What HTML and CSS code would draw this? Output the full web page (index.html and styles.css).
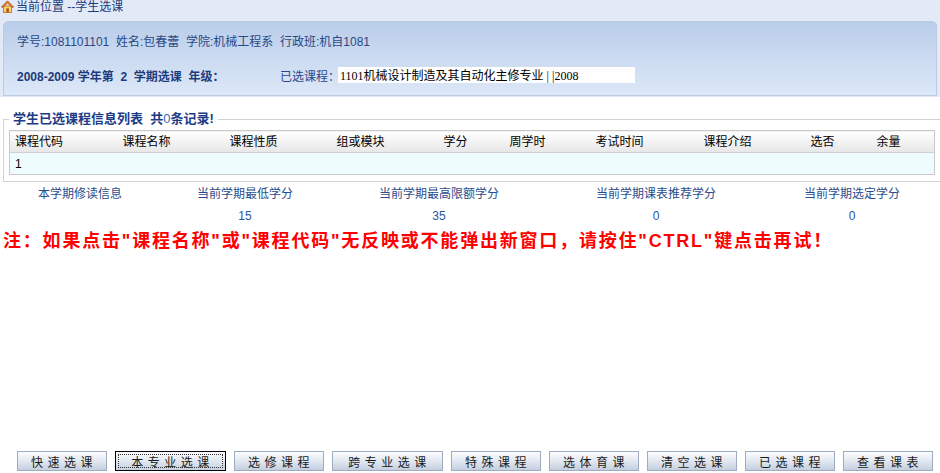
FILE: index.html
```html
<!DOCTYPE html>
<html lang="zh-CN">
<head>
    <meta charset="UTF-8">
    <title>学生选课</title>
    <link rel="stylesheet" href="styles.css">
</head>
<body>
    <div class="top">
        <div class="crumb">
            <svg width="13" height="13" viewBox="0 0 13 13">
                <rect x="2.5" y="6" width="8" height="6.5" fill="#f7d46e" stroke="#c8832a"/>
                <rect x="5.3" y="8.3" width="2.6" height="4.2" fill="#b8561c"/>
                <polygon points="6.5,0.8 0.3,7 2,7.6 6.5,3 11,7.6 12.7,7" fill="#e0762a" stroke="#b4521a" stroke-width="0.6"/>
            </svg>
            <span>当前位置 --学生选课</span>
        </div>
        <div class="panel">
            <div class="line1">学号:1081101101&nbsp; 姓名:包春蕾&nbsp; 学院:机械工程系&nbsp; 行政班:机自1081</div>
            <div class="line2">
                <span class="term">2008-2009 学年第&nbsp; 2&nbsp; 学期选课&nbsp; 年级：</span>
                <span class="sel">已选课程：</span>
                <input class="plan" type="text" value="1101机械设计制造及其自动化主修专业 | |2008" readonly>
            </div>
        </div>
    </div>

    <fieldset class="list">
        <legend>学生已选课程信息列表&nbsp; 共<span class="num">0</span>条记录!</legend>
        <table class="grid">
            <thead>
                <tr>
                    <th class="w108">课程代码</th>
                    <th class="w107">课程名称</th>
                    <th class="w107">课程性质</th>
                    <th class="w107">组或模块</th>
                    <th class="w66">学分</th>
                    <th class="w86">周学时</th>
                    <th class="w108">考试时间</th>
                    <th class="w107">课程介绍</th>
                    <th class="w66">选否</th>
                    <th>余量</th>
                </tr>
            </thead>
            <tbody>
                <tr>
                    <td>1</td><td></td><td></td><td></td><td></td><td></td><td></td><td></td><td></td><td></td>
                </tr>
            </tbody>
        </table>
    </fieldset>

    <div class="credits">
        <div>本学期修读信息</div>
        <div>当前学期最低学分</div>
        <div>当前学期最高限额学分</div>
        <div>当前学期课表推荐学分</div>
        <div>当前学期选定学分</div>
        <div class="val"></div>
        <div class="val">15</div>
        <div class="val">35</div>
        <div class="val">0</div>
        <div class="val">0</div>
    </div>

    <p class="notice">注：如果点击"课程名称"或"课程代码"无反映或不能弹出新窗口，请按住"CTRL"键点击再试！</p>

    <div class="actions">
        <button class="btn">快速选课</button>
        <button class="btn wide on">本专业选课</button>
        <button class="btn">选修课程</button>
        <button class="btn wide">跨专业选课</button>
        <button class="btn">特殊课程</button>
        <button class="btn">选体育课</button>
        <button class="btn">清空选课</button>
        <button class="btn">已选课程</button>
        <button class="btn">查看课表</button>
    </div>
</body>
</html>
```

FILE: styles.css
```css
html { overflow: hidden; }
body { margin: 0; min-height: 473px; display: flex; flex-direction: column; font: 12px "Liberation Sans", "Noto Sans CJK SC", sans-serif; color: #000; background: #fff; }

.top { background: #e2eaf8; padding-bottom: 1px; }
.crumb { height: 21px; display: flex; align-items: flex-start; gap: 2px; padding-left: 1px; color: #1f3c7c; line-height: 15px; }
.crumb svg { flex: none; }
.panel { height: 73px; margin: 0 3px; padding: 0 13px; border: 1px solid #b9cae3; border-radius: 5px 5px 0 0; background: linear-gradient(#b9cde9, #dde8f8); color: #2a4886; }
.line1 { height: 16px; line-height: 16px; margin-top: 12px; }
.line2 { height: 18px; margin-top: 16px; display: flex; align-items: center; }
.term { width: 263px; flex: none; font-weight: bold; color: #1d3b7a; }
.sel { flex: none; }
.plan { width: 297px; height: 16px; box-sizing: border-box; margin: 0 0 0 -2px; padding: 0 2px; border: none; background: #fff; font: 12px "Liberation Serif", "Noto Sans CJK SC", serif; color: #000; }

.list { margin: 14px -1px 0 3px; padding: 3px 5px 6px; border: 1px solid #d2d2d2; }
.list legend { padding: 0 4px; font-size: 13px; font-weight: bold; line-height: 16px; color: #1c3c86; }
.list .num { color: #3a66b8; font-weight: normal; }
.grid { width: 100%; table-layout: fixed; border-collapse: collapse; border: 1px solid #c9c9c9; }
.grid th, .grid td { box-sizing: border-box; padding: 0 0 0 5px; white-space: nowrap; line-height: 16px; }
.grid th { height: 22px; text-align: left; font-weight: normal; background: linear-gradient(#ffffff, #e6e6e6); border-bottom: 1px solid #cfcfcf; }
.grid td { height: 22px; background: #effcfd; }
.w108 { width: 108px; }
.w107 { width: 107px; }
.w86 { width: 86px; }
.w66 { width: 66px; }

.credits { display: grid; grid-template-columns: 160px 170px 218px 216px 176px; grid-template-rows: 21px 22px; margin-top: 2px; text-align: center; color: #2a4c8c; }
.credits div { line-height: 21px; }
.credits .val { line-height: 22px; color: #2a55a0; }

.notice { margin: 2px 0 0 3px; font-size: 18px; line-height: 24px; font-weight: bold; letter-spacing: 1.8px; color: #f00; white-space: nowrap; }

.actions { margin-top: auto; padding: 0 0 2px 17px; display: flex; gap: 8px; }
.btn { width: 90px; height: 20px; padding: 0 0 0 4px; border: 1px solid #9eacc2; background: linear-gradient(#fbfcfe, #e2e8f1 50%, #c4cfdf); font: 12px "Liberation Sans", "Noto Sans CJK SC", sans-serif; letter-spacing: 4.5px; color: #1a1a1a; cursor: pointer; }
.btn.wide { width: 111px; }
.btn.on { border-color: #000; outline: 1px dotted #333; outline-offset: -4px; }
```
